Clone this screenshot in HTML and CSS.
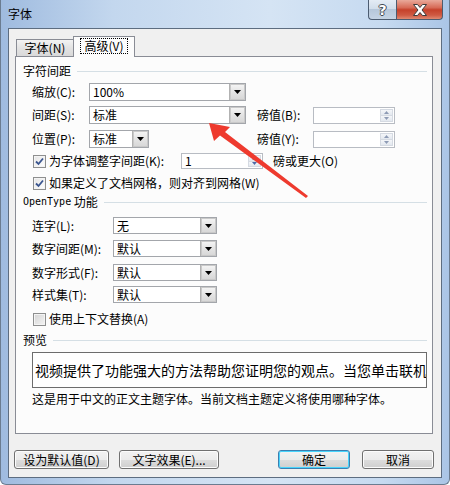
FILE: index.html
```html
<!DOCTYPE html>
<html lang="zh-CN">
<head>
<meta charset="utf-8">
<title>字体</title>
<link rel="stylesheet" href="styles.css">
</head>
<body>
<div class="window">
  <div class="titlebar">
    <span class="title">字体</span>
    <div class="caption">
      <div class="cbtn help">?</div>
      <div class="cbtn close">
        <svg width="16" height="12" viewBox="0 0 16 12"><path d="M1.5 0.5h4l2.5 3 2.5-3h4l-4.5 5.5 4.5 5.5h-4l-2.5-3-2.5 3h-4l4.5-5.5z" fill="#fff" stroke="#3b3b3b" stroke-width="1"/></svg>
      </div>
    </div>
  </div>
  <div class="client">
    <div class="tabs">
      <div class="tab">字体(N)</div>
      <div class="tab active"><span class="focus">高级(V)</span></div>
    </div>
    <div class="panel">
      <div class="ghead ghead-1">字符间距</div>

      <div class="row row-a">
        <span class="lbl w57">缩放(C):</span>
        <div class="combo w157"><span class="val">100%</span><span class="dd"><svg width="7" height="4" viewBox="0 0 7 4"><polygon points="0,0 7,0 3.5,4" fill="#000"/></svg></span></div>
      </div>

      <div class="row row-b">
        <span class="lbl w57">间距(S):</span>
        <div class="combo w157"><span class="val">标准</span><span class="dd"><svg width="7" height="4" viewBox="0 0 7 4"><polygon points="0,0 7,0 3.5,4" fill="#000"/></svg></span></div>
        <span class="lbl rlbl">磅值(B):</span>
        <div class="spin w82"><span class="val"></span><span class="sb"><span class="up"><svg width="5" height="3" viewBox="0 0 5 3"><polygon points="2.5,0 5,3 0,3" fill="#8e9bb5"/></svg></span><span class="down"><svg width="5" height="3" viewBox="0 0 5 3"><polygon points="0,0 5,0 2.5,3" fill="#8e9bb5"/></svg></span></span></div>
      </div>

      <div class="row row-c">
        <span class="lbl w57">位置(P):</span>
        <div class="combo w60"><span class="val">标准</span><span class="dd"><svg width="7" height="4" viewBox="0 0 7 4"><polygon points="0,0 7,0 3.5,4" fill="#000"/></svg></span></div>
        <span class="lbl rlbl2">磅值(Y):</span>
        <div class="spin w82"><span class="val"></span><span class="sb"><span class="up"><svg width="5" height="3" viewBox="0 0 5 3"><polygon points="2.5,0 5,3 0,3" fill="#8e9bb5"/></svg></span><span class="down"><svg width="5" height="3" viewBox="0 0 5 3"><polygon points="0,0 5,0 2.5,3" fill="#8e9bb5"/></svg></span></span></div>
      </div>

      <div class="row row-d">
        <span class="chk on"><svg width="9" height="9" viewBox="0 0 9 9"><path d="M1 4.5 L3.5 7 L8 1.5" fill="none" stroke="#3a558f" stroke-width="1.8"/></svg></span>
        <span class="lbl w132">为字体调整字间距(K):</span>
        <div class="spin w82"><span class="val">1</span><span class="sb"><span class="up"><svg width="5" height="3" viewBox="0 0 5 3"><polygon points="2.5,0 5,3 0,3" fill="#8e9bb5"/></svg></span><span class="down"><svg width="5" height="3" viewBox="0 0 5 3"><polygon points="0,0 5,0 2.5,3" fill="#4d6ba8"/></svg></span></span></div>
        <span class="lbl after">磅或更大(O)</span>
      </div>

      <div class="row row-e">
        <span class="chk on"><svg width="9" height="9" viewBox="0 0 9 9"><path d="M1 4.5 L3.5 7 L8 1.5" fill="none" stroke="#3a558f" stroke-width="1.8"/></svg></span>
        <span class="lbl">如果定义了文档网格，则对齐到网格(W)</span>
      </div>

      <div class="ghead ghead-2"><span class="mono">OpenType</span>&nbsp;功能</div>

      <div class="row ot row-f">
        <span class="lbl w81">连字(L):</span>
        <div class="combo w104"><span class="val">无</span><span class="dd"><svg width="7" height="4" viewBox="0 0 7 4"><polygon points="0,0 7,0 3.5,4" fill="#000"/></svg></span></div>
      </div>
      <div class="row ot row-g">
        <span class="lbl w81">数字间距(M):</span>
        <div class="combo w104"><span class="val">默认</span><span class="dd"><svg width="7" height="4" viewBox="0 0 7 4"><polygon points="0,0 7,0 3.5,4" fill="#000"/></svg></span></div>
      </div>
      <div class="row ot row-h">
        <span class="lbl w81">数字形式(F):</span>
        <div class="combo w104"><span class="val">默认</span><span class="dd"><svg width="7" height="4" viewBox="0 0 7 4"><polygon points="0,0 7,0 3.5,4" fill="#000"/></svg></span></div>
      </div>
      <div class="row ot row-i">
        <span class="lbl w81">样式集(T):</span>
        <div class="combo w104"><span class="val">默认</span><span class="dd"><svg width="7" height="4" viewBox="0 0 7 4"><polygon points="0,0 7,0 3.5,4" fill="#000"/></svg></span></div>
      </div>
      <div class="row row-j">
        <span class="chk"></span>
        <span class="lbl">使用上下文替换(A)</span>
      </div>

      <div class="ghead ghead-3">预览</div>
      <div class="preview">视频提供了功能强大的方法帮助您证明您的观点。当您单击联机</div>
      <div class="desc">这是用于中文的正文主题字体。当前文档主题定义将使用哪种字体。</div>
    </div>
    <div class="buttons">
      <div class="btn b1">设为默认值(D)</div>
      <div class="btn b2">文字效果(E)...</div>
      <div class="btn b3 default">确定</div>
      <div class="btn b4">取消</div>
    </div>
  </div>
  <svg class="arrow" width="450" height="485" viewBox="0 0 450 485">
    <polygon points="209,123 230,127 225,132 308,196 306,198 220,135.5 214,141" fill="#ee3a2e"/>
  </svg>
</div>
</body>
</html>
```

FILE: styles.css
```css
* { box-sizing: border-box; }

body {
  margin: 0;
  width: 450px;
  height: 485px;
  overflow: hidden;
  font: 12px/14px "Noto Sans CJK SC", "Noto Sans", sans-serif;
  color: #000;
  background: #fff;
}

.window {
  position: relative;
  width: 450px;
  height: 485px;
  border: 1px solid #6b7c90;
  border-top: 0;
  border-radius: 0 0 6px 6px;
  background: linear-gradient(to right, #9fbbdf 0, #c3d7ee 25%, #d5e4f4 60%, #c6daf0 85%, #aac5e6 100%);
  padding: 0 7px 6px 7px;
  display: flex;
  flex-direction: column;
}

.titlebar {
  height: 28px;
  display: flex;
  align-items: flex-start;
}

.title {
  margin-top: 7px;
  line-height: 14px;
}

.caption {
  margin-left: auto;
  margin-right: -1px;
  display: flex;
}

.cbtn {
  height: 20px;
  border: 1px solid #4c5c70;
  border-top: 0;
  display: flex;
  align-items: center;
  justify-content: center;
}

.help {
  width: 28px;
  border-right: 0;
  border-radius: 0 0 0 4px;
  background: linear-gradient(to bottom, #e4ecf5 0, #d2deeb 45%, #b6c7da 50%, #c5d4e4 100%);
  color: #fff;
  font: bold 14px/16px "DejaVu Sans", sans-serif;
  text-shadow: 1px 0 0 #404850, -1px 0 0 #404850, 0 1px 0 #404850, 0 -1px 0 #404850;
}

.close {
  width: 47px;
  border-radius: 0 0 4px 0;
  background: linear-gradient(to bottom, #e9a99a 0, #d76b57 40%, #c5412b 52%, #cf5a43 80%, #e08a72 100%);
}

.client {
  flex: 1;
  border: 1px solid #5d6d80;
  background: #f0f0f0;
  display: flex;
  flex-direction: column;
}

.tabs {
  display: flex;
  align-items: flex-end;
  height: 20px;
  margin: 7px 0 0 7px;
  position: relative;
  z-index: 1;
}

.tab {
  width: 57px;
  height: 17px;
  border: 1px solid #898c95;
  border-bottom: 0;
  border-right: 0;
  background: linear-gradient(to bottom, #f3f3f3, #e3e3e3 50%, #d9d9d9);
  display: flex;
  align-items: center;
  justify-content: center;
  line-height: 14px;
}

.tab.active {
  width: 62px;
  height: 21px;
  margin-bottom: -1px;
  border-right: 1px solid #898c95;
  background: #fcfcfc;
  padding-bottom: 2px;
}

.focus {
  outline: 1px dotted #000;
  padding: 0 3px;
  line-height: 14px;
}

.panel {
  margin-left: 6px;
  width: 418px;
  height: 378px;
  border: 1px solid #898c95;
  background: #fcfcfc;
  display: flex;
  flex-direction: column;
}

.ghead {
  height: 14px;
  line-height: 14px;
  margin: 0 5px 0 7px;
  display: flex;
  align-items: center;
  white-space: nowrap;
}

.ghead::after {
  content: "";
  flex: 1;
  border-top: 1px solid #d5dfe5;
  margin-left: 6px;
}

.mono {
  font: 10px/14px "DejaVu Sans Mono", monospace;
}

.ghead-1 { margin-top: 7px; }
.ghead-2 { margin-top: 5px; }
.ghead-3 { margin-top: 7px; }

.row {
  display: flex;
  align-items: center;
  padding-left: 16px;
  white-space: nowrap;
}

.row-a { margin-top: 5px; height: 18px; }
.row-b { margin-top: 5px; height: 18px; }
.row-c { margin-top: 6px; height: 18px; }
.row-d { margin-top: 5px; height: 16px; padding-left: 17px; }
.row-e { margin-top: 7px; height: 14px; padding-left: 17px; }
.row-f { margin-top: 8px; height: 17px; }
.row-g { margin-top: 6px; height: 17px; }
.row-h { margin-top: 7px; height: 17px; }
.row-i { margin-top: 5px; height: 17px; }
.row-j { margin-top: 9px; height: 14px; padding-left: 17px; }

.lbl { line-height: 14px; }
.w57 { width: 57px; }
.w81 { width: 81px; }
.w132 { width: 132px; }
.rlbl { margin-left: 11px; width: 56px; }
.rlbl2 { margin-left: 108px; width: 56px; }
.after { margin-left: 10px; }

.combo, .spin {
  height: 100%;
  border: 1px solid #a3a6ab;
  background: #fff;
  display: flex;
  align-items: center;
}

.w157 { width: 157px; }
.w60 { width: 60px; }
.w104 { width: 104px; }
.w82 { width: 82px; }

.val {
  flex: 1;
  padding-left: 3px;
  line-height: 14px;
}

.dd {
  width: 16px;
  height: 100%;
  border: 1px solid #b2b2b2;
  border-right: 0;
  border-top: 0;
  border-bottom: 0;
  background: linear-gradient(to bottom, #f6f6f6, #e4e4e4 50%, #d6d6d6);
  display: flex;
  align-items: center;
  justify-content: center;
  box-shadow: inset 0 0 0 1px #c9c9c9;
}

.spin { height: 17px; border-color: #b8bcc3; }
.row-d .spin { height: 16px; }

.sb {
  width: 15px;
  height: 100%;
  padding: 1px;
  display: flex;
  flex-direction: column;
}

.sb span {
  flex: 1;
  display: flex;
  align-items: center;
  justify-content: center;
  background: linear-gradient(to bottom, #f4f6f9, #e3e8ef);
  border: 1px solid #d5dae2;
}

.sb .down { border-top: 0; }

.chk {
  width: 13px;
  height: 13px;
  margin-right: 3px;
  border: 1px solid #8e8f8f;
  background: linear-gradient(135deg, #d4d4d4, #f4f4f4);
  box-shadow: inset 0 0 0 1px #f4f4f4;
  display: flex;
  align-items: center;
  justify-content: center;
}

.chk.on {
  background: linear-gradient(135deg, #e4e4e4, #ffffff);
}

.preview {
  margin: 5px 0 0 16px;
  width: 395px;
  height: 36px;
  border: 1px solid #6d6d6d;
  background: #fff;
  font-size: 14px;
  line-height: 34px;
  padding-left: 2px;
  white-space: nowrap;
  overflow: hidden;
}

.desc {
  margin-top: 4px;
  padding-left: 16px;
  height: 14px;
  line-height: 14px;
  white-space: nowrap;
}

.buttons {
  display: flex;
  margin-top: 16px;
  padding-left: 5px;
}

.btn {
  height: 19px;
  border: 1px solid #707070;
  border-radius: 3px;
  background: linear-gradient(to bottom, #f2f2f2 0, #ebebeb 50%, #dddddd 51%, #cfcfcf 100%);
  box-shadow: inset 0 0 0 1px #fcfcfc;
  display: flex;
  align-items: center;
  justify-content: center;
  line-height: 14px;
  white-space: nowrap;
}

.b1 { width: 95px; }
.b2 { width: 100px; margin-left: 10px; }
.b3 { width: 72px; margin-left: 59px; }
.b4 { width: 72px; margin-left: 12px; }

.btn.default {
  border-color: #3c7fb1;
  box-shadow: inset 0 0 0 1px #48d4fc;
}

.arrow {
  position: absolute;
  left: -1px;
  top: 0;
  pointer-events: none;
}
```
